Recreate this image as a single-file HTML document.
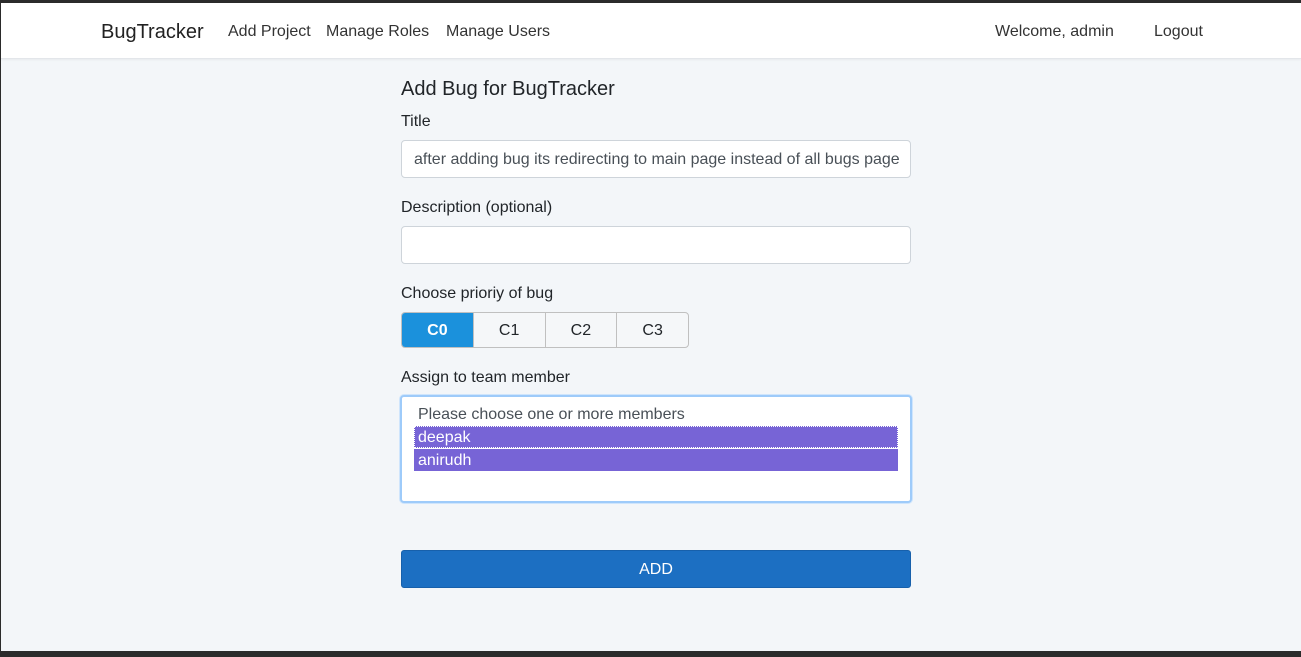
<!DOCTYPE html>
<html><head><style>
*{box-sizing:border-box}
body{margin:0;width:1301px;height:657px;background:#2b2b2b;font-family:"Liberation Sans",sans-serif;color:#212529;overflow:hidden}
.page{position:absolute;left:1px;top:3px;width:1300px;height:648px;background:#f3f6f9}
.nav{position:absolute;left:0;top:0;width:1300px;height:56px;background:#fff;border-bottom:1px solid #e3e6ea;box-shadow:0 1px 2px rgba(0,0,0,.05)}
.nav span{position:absolute;top:20px;font-size:16px;color:#333}
.brand{font-size:20px!important;top:18px!important;color:#222!important}
.lbl{position:absolute;left:400px;font-size:16px;color:#212529}
.inp{position:absolute;left:400px;width:510px;height:38px;background:#fff;border:1px solid #ced4da;border-radius:4px;font-size:16px;color:#495057;padding:10px 12px 8px;white-space:nowrap;overflow:hidden}
.grp{position:absolute;left:400px;top:309px;width:288px;height:36px;border:1px solid #c0c0c0;border-radius:4px;display:flex;overflow:hidden;background:#f5f7f9}
.grp div{flex:1;text-align:center;line-height:36px;font-size:16px;border-left:1px solid #c0c0c0}
.grp div:first-child{border-left:none;background:#1b91dc;color:#fff;font-weight:bold}
.sel{position:absolute;left:399px;top:392px;width:512px;height:108px;background:#fff;border:2px solid #9ecbfa;border-radius:4px;box-shadow:0 0 0 1px #cfe5fc}
.opt{position:absolute;left:12px;width:484px;height:22px;font-size:16px;line-height:24px;padding-left:4px}
.btn{position:absolute;left:400px;top:547px;width:510px;height:38px;background:#1c6fc2;border:1px solid #1760ab;border-radius:3px;color:#fff;text-align:center;line-height:38px;font-size:16px}
</style></head><body>
<div class="page">
<div class="nav">
<span class="brand" style="left:100px">BugTracker</span>
<span style="left:227px">Add Project</span>
<span style="left:325px">Manage Roles</span>
<span style="left:445px">Manage Users</span>
<span style="left:994px">Welcome, admin</span>
<span style="left:1153px">Logout</span>
</div>
<div class="lbl" style="top:75px;font-size:20px">Add Bug for BugTracker</div>
<div class="lbl" style="top:110px">Title</div>
<div class="inp" style="top:137px">after adding bug its redirecting to main page instead of all bugs page</div>
<div class="lbl" style="top:196px">Description (optional)</div>
<div class="inp" style="top:223px"></div>
<div class="lbl" style="top:282px">Choose prioriy of bug</div>
<div class="grp"><div>C0</div><div>C1</div><div>C2</div><div>C3</div></div>
<div class="lbl" style="top:366px">Assign to team member</div>
<div class="sel">
<div class="opt" style="top:6px;color:#495057">Please choose one or more members</div>
<div class="opt" style="top:29px;background:#7764d6;color:#fff;outline:1px dotted #fff;outline-offset:-1px">deepak</div>
<div class="opt" style="top:52px;background:#7764d6;color:#fff">anirudh</div>
</div>
<div class="btn">ADD</div>
</div>
</body></html>
